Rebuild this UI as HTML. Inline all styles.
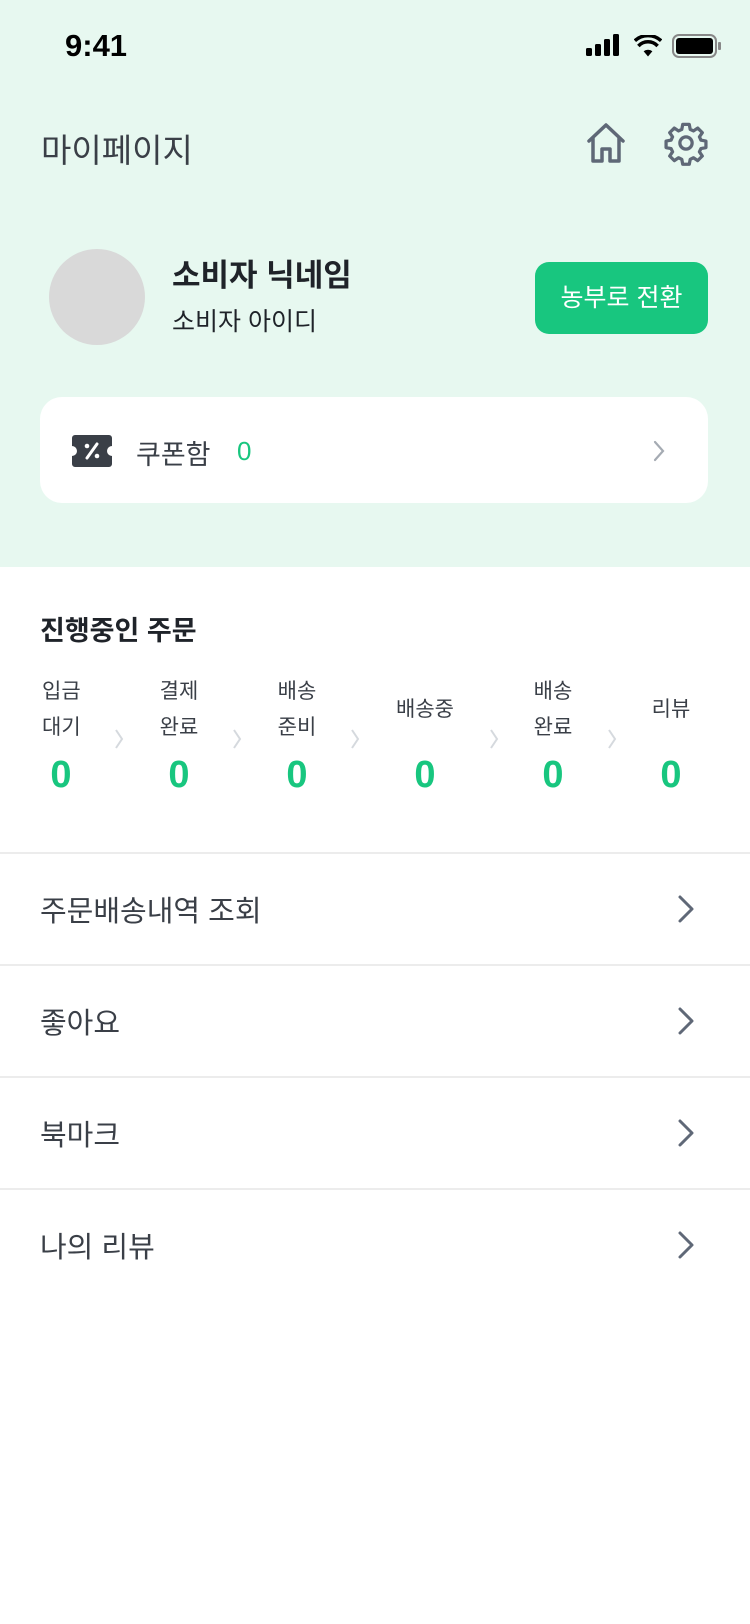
<!DOCTYPE html>
<html><head><meta charset="utf-8"><style>
*{margin:0;padding:0;box-sizing:border-box}
body{width:750px;height:1624px;background:#fff;font-family:"Liberation Sans","Noto Sans CJK KR",sans-serif;position:relative;overflow:hidden;color:#3a3f47}
.top{position:absolute;left:0;top:0;width:750px;height:567px;background:#e7f8f0}
.a{position:absolute;white-space:nowrap}
.row{position:absolute;left:0;width:750px;height:112px;border-top:2px solid #ececec}
.row span{position:absolute;left:40px;top:50%;transform:translateY(-50%);font-size:29px;color:#3a3f47}
.row svg{position:absolute;left:676px;top:50%;margin-top:-16px}
.col{position:absolute;width:90px;text-align:center;font-size:21px;line-height:36px;color:#3a3f47}
.z{position:absolute;width:90px;text-align:center;font-size:38px;font-weight:bold;color:#18c67f}
.ch{position:absolute;top:727px}
</style></head><body>
<div class="top"></div>
<div class="a" style="left:65px;top:28px;font-size:31px;font-weight:bold;color:#000">9:41</div>
<svg class="a" style="left:586px;top:34px" width="36" height="22"><rect x="0" y="14" width="6" height="8" rx="1.5" fill="#000"/><rect x="9" y="10" width="6" height="12" rx="1.5" fill="#000"/><rect x="18" y="5" width="6" height="17" rx="1.5" fill="#000"/><rect x="27" y="0" width="6" height="22" rx="1.5" fill="#000"/></svg>
<svg class="a" style="left:634px;top:35px" width="28" height="22" viewBox="0 0 32 24"><path d="M16 24 L11 18 A8 8 0 0 1 21 18 Z" fill="#000"/><path d="M5 12 A15 15 0 0 1 27 12" stroke="#000" stroke-width="4" fill="none"/><path d="M1 6 A22 22 0 0 1 31 6" stroke="#000" stroke-width="4" fill="none"/></svg>
<svg class="a" style="left:672px;top:34px" width="50" height="24"><rect x="1" y="1" width="43" height="22" rx="6" stroke="#888" stroke-width="2" fill="none"/><rect x="4" y="4" width="37" height="16" rx="3" fill="#000"/><rect x="46" y="8" width="3" height="8" rx="1" fill="#888"/></svg>
<div class="a" style="left:41px;top:124px;font-size:33px;color:#3a3f47">마이페이지</div>
<svg class="a" style="left:584px;top:121px" width="44" height="44" viewBox="0 0 44 44"><path d="M5 20 L22 4 L39 20 M9 17 V40 H18 V28 H26 V40 H35 V17" stroke="#5f6877" stroke-width="3.5" fill="none" stroke-linejoin="round" stroke-linecap="round"/></svg>
<svg class="a" style="left:663px;top:120px" width="46" height="46" viewBox="0 0 24 24"><path d="M10.3 2.3h3.4l.5 2.6 1.7.8 2.2-1.5 2.4 2.4-1.5 2.2.8 1.7 2.6.5v3.4l-2.6.5-.8 1.7 1.5 2.2-2.4 2.4-2.2-1.5-1.7.8-.5 2.6h-3.4l-.5-2.6-1.7-.8-2.2 1.5-2.4-2.4 1.5-2.2-.8-1.7-2.6-.5v-3.4l2.6-.5.8-1.7-1.5-2.2 2.4-2.4 2.2 1.5 1.7-.8z" stroke="#5f6877" stroke-width="1.7" fill="none" stroke-linejoin="round"/><circle cx="12" cy="12" r="3.2" stroke="#5f6877" stroke-width="1.7" fill="none"/></svg>
<div class="a" style="left:49px;top:249px;width:96px;height:96px;border-radius:50%;background:#d9d9d9"></div>
<div class="a" style="left:172px;top:250px;font-size:31px;font-weight:bold;color:#1f2329">소비자 닉네임</div>
<div class="a" style="left:172px;top:302px;font-size:25px;color:#1f2329">소비자 아이디</div>
<div class="a" style="left:535px;top:262px;width:173px;height:72px;border-radius:14px;background:#18c67f;color:#fff;font-size:25px;text-align:center;line-height:72px">농부로 전환</div>
<div class="a" style="left:40px;top:397px;width:668px;height:106px;border-radius:22px;background:#fff"></div>
<svg class="a" style="left:72px;top:435px" width="40" height="32" viewBox="0 0 40 32"><path d="M3 0 H37 A3 3 0 0 1 40 3 V11 A5 5 0 0 0 40 21 V29 A3 3 0 0 1 37 32 H3 A3 3 0 0 1 0 29 V21 A5 5 0 0 0 0 11 V3 A3 3 0 0 1 3 0Z" fill="#3a3f47"/><path d="M15 23 L25 9" stroke="#fff" stroke-width="3" stroke-linecap="round"/><circle cx="15" cy="11" r="2.3" fill="#fff"/><circle cx="25" cy="21" r="2.3" fill="#fff"/></svg>
<div class="a" style="left:136px;top:433px;font-size:27px;color:#3a3f47">쿠폰함</div>
<div class="a" style="left:237px;top:436px;font-size:26px;color:#18c67f">0</div>
<svg class="a" style="left:652px;top:439px" width="14" height="24"><path d="M3 3 L11 12 L3 21" stroke="#a5abb3" stroke-width="2.2" fill="none" stroke-linecap="round"/></svg>
<div class="a" style="left:40px;top:609px;font-size:27px;font-weight:bold;color:#1f2329">진행중인 주문</div>
<div class="col" style="top:674px;text-align:left;left:42px;width:60px">입금<br>대기</div>
<div class="col" style="left:134px;top:674px">결제<br>완료</div>
<div class="col" style="left:252px;top:674px">배송<br>준비</div>
<div class="col" style="left:380px;top:692px">배송중</div>
<div class="col" style="left:508px;top:674px">배송<br>완료</div>
<div class="col" style="left:626px;top:692px">리뷰</div>
<div class="z" style="left:16px;top:754px">0</div>
<div class="z" style="left:134px;top:754px">0</div>
<div class="z" style="left:252px;top:754px">0</div>
<div class="z" style="left:380px;top:754px">0</div>
<div class="z" style="left:508px;top:754px">0</div>
<div class="z" style="left:626px;top:754px">0</div>
<svg class="a ch" style="left:113px" width="12" height="24"><path d="M3 3 L9 12 L3 21" stroke="#d5d9de" stroke-width="2" fill="none"/></svg>
<svg class="a ch" style="left:231px" width="12" height="24"><path d="M3 3 L9 12 L3 21" stroke="#d5d9de" stroke-width="2" fill="none"/></svg>
<svg class="a ch" style="left:349px" width="12" height="24"><path d="M3 3 L9 12 L3 21" stroke="#d5d9de" stroke-width="2" fill="none"/></svg>
<svg class="a ch" style="left:488px" width="12" height="24"><path d="M3 3 L9 12 L3 21" stroke="#d5d9de" stroke-width="2" fill="none"/></svg>
<svg class="a ch" style="left:606px" width="12" height="24"><path d="M3 3 L9 12 L3 21" stroke="#d5d9de" stroke-width="2" fill="none"/></svg>
<div class="row" style="top:852px"><span>주문배송내역 조회</span><svg width="20" height="32"><path d="M4 4 L16 16 L4 28" stroke="#5f6877" stroke-width="3" fill="none" stroke-linecap="round" stroke-linejoin="round"/></svg></div>
<div class="row" style="top:964px"><span>좋아요</span><svg width="20" height="32"><path d="M4 4 L16 16 L4 28" stroke="#5f6877" stroke-width="3" fill="none" stroke-linecap="round" stroke-linejoin="round"/></svg></div>
<div class="row" style="top:1076px"><span>북마크</span><svg width="20" height="32"><path d="M4 4 L16 16 L4 28" stroke="#5f6877" stroke-width="3" fill="none" stroke-linecap="round" stroke-linejoin="round"/></svg></div>
<div class="row" style="top:1188px"><span>나의 리뷰</span><svg width="20" height="32"><path d="M4 4 L16 16 L4 28" stroke="#5f6877" stroke-width="3" fill="none" stroke-linecap="round" stroke-linejoin="round"/></svg></div>
</body></html>
